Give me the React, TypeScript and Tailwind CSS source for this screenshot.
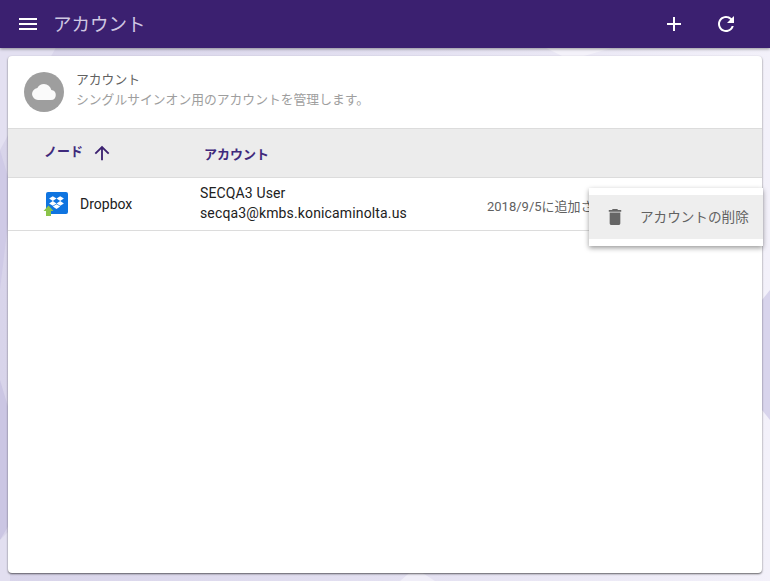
import type { ReactNode } from "react";

const font = "font-['Roboto','Noto_Sans_CJK_JP',sans-serif]";

function Icon({ size = 24, fill = "#fff", className, children }: { size?: number; fill?: string; className?: string; children: ReactNode }) {
  return (
    <svg width={size} height={size} viewBox="0 0 24 24" fill={fill} className={className}>
      {children}
    </svg>
  );
}

// faint polygons of the wallpaper, only seen around the card
function Wallpaper() {
  return (
    <svg className="absolute inset-0 h-full w-full" viewBox="0 0 770 581" preserveAspectRatio="none">
      <polygon points="0,40 60,40 0,150" fill="#e3e0f1" />
      <polygon points="0,150 12,190 0,290" fill="#cfcae6" />
      <polygon points="0,380 12,420 12,520 0,540" fill="#cbc6e3" />
      <polygon points="0,540 10,530 10,581 0,581" fill="#e2dff0" />
      <polygon points="400,581 415,568 435,581" fill="#f0eef8" />
      <polygon points="530,40 570,60 640,40" fill="#f4f2fa" />
      <polygon points="762,300 770,290 770,420 762,410" fill="#d8d4ec" />
    </svg>
  );
}

function DropboxIcon() {
  return (
    <svg width="26" height="26" viewBox="0 0 26 26" className="shrink-0">
      <rect x="3" y="1" width="22" height="22" rx="2" fill="#0f74e0" />
      <g fill="#fff">
        <path d="M9.800 5.200l3.700 2.400-3.700 2.400-3.700-2.400z" />
        <path d="M17.200 5.200l3.700 2.400-3.700 2.400-3.700-2.400z" />
        <path d="M9.800 10l3.700 2.400-3.700 2.400-3.700-2.400z" />
        <path d="M17.200 10l3.700 2.400-3.700 2.400-3.700-2.400z" />
        <path d="M9.800 15.500l3.700-2.300 3.700 2.300-3.700 2.400z" />
      </g>
      <path d="M5.500 14.500l5 5.500H8v5H3v-5H.5z" fill="#8bc34a" />
    </svg>
  );
}

export default function App() {
  return (
    <div className={`${font} relative flex h-[581px] w-full flex-col overflow-hidden bg-gradient-to-r from-[#d8d4ea] via-[#e3e0f1] to-[#f3f1fa]`}>
      <Wallpaper />

      <header className="relative flex h-12 shrink-0 items-center bg-[#3b2070] pl-4 pr-[32px] shadow-[0_1px_3px_rgba(0,0,0,0.4)]">
        <Icon>
          <path d="M3 18h18v-2H3v2zm0-5h18v-2H3v2zm0-7v2h18V6H3z" />
        </Icon>
        <h1 className="ml-[13px] mt-[3px] text-[18.5px] text-[#cfc7e2]">アカウント</h1>
        <Icon className="ml-auto">
          <path d="M19 13h-6v6h-2v-6H5v-2h6V5h2v6h6v2z" />
        </Icon>
        <Icon className="ml-[28px]">
          <path d="M17.650 6.350A7.958 7.958 0 0 0 12 4c-4.420 0-7.990 3.580-7.990 8s3.570 8 7.990 8c3.730 0 6.840-2.550 7.730-6h-2.080A5.990 5.990 0 0 1 12 18c-3.310 0-6-2.690-6-6s2.690-6 6-6c1.660 0 3.140.69 4.220 1.780L13 11h7V4l-2.350 2.350z" />
        </Icon>
      </header>

      <main className="relative mx-2 mb-2 mt-2 min-h-0 flex-1 rounded-sm bg-white shadow-[0_1px_2px_rgba(0,0,0,0.6)]">
        <section className="flex h-[73px] items-center border-b border-[#dcdcdc] pl-4">
          <div className="flex h-10 w-10 items-center justify-center rounded-full bg-[#9e9e9e]">
            <Icon fill="#fafafa">
              <path d="M19.350 10.040A7.490 7.490 0 0 0 12 4a7.500 7.500 0 0 0-6.650 4.040A6 6 0 0 0 6 20h13a5 5 0 0 0 .35-9.960z" />
            </Icon>
          </div>
          <div className="-mt-1 ml-3 text-[12.800px] leading-[20px]">
            <p className="text-[#616161]">アカウント</p>
            <p className="text-[#9e9e9e]">シングルサインオン用のアカウントを管理します。</p>
          </div>
        </section>

        <div className="flex h-[49px] items-center border-b border-[#dcdcdc] bg-[#ececec] text-[13px] font-bold text-[#3f2a7c]">
          <div className="flex w-[196px] items-center pl-9">
            <span className="-mt-[2px]">ノード</span>
            <Icon size={22} fill="#3b2070" className="ml-[8px]">
              <path d="M4 12l1.410 1.410L11 7.830V20h2V7.830l5.580 5.590L20 12l-8-8-8 8z" />
            </Icon>
          </div>
          <span className="mt-1">アカウント</span>
        </div>

        <div className="flex h-[53px] items-center border-b border-[#dcdcdc] text-sm">
          <div className="flex w-[192px] items-center pl-[35px] text-[#212121]">
            <DropboxIcon />
            <span className="ml-[11px]">Dropbox</span>
          </div>
          <div className="-mt-[2px] w-[287px] leading-[20px] tracking-[0.14px] text-[#212121]">
            <p>SECQA3 User</p>
            <p>secqa3@kmbs.konicaminolta.us</p>
          </div>
          <span className="mt-[6px] whitespace-nowrap text-[13px] text-[#616161]">2018/9/5に追加されました</span>
        </div>

        <div className="absolute right-[-1px] top-[132px] w-[174px] bg-white py-[7px] shadow-[0_2px_5px_rgba(0,0,0,0.4)]">
          <div className="flex h-[44px] items-center bg-[#eeeeee] pl-[19px] text-[13.600px] text-[#616161]">
            <svg width="14" height="16" viewBox="5 3 14 18" fill="#666">
              <path d="M6 19c0 1.100.9 2 2 2h8c1.100 0 2-.9 2-2V7H6v12zM19 4h-3.500l-1-1h-5l-1 1H5v2h14V4z" />
            </svg>
            <span className="ml-[18px]">アカウントの削除</span>
          </div>
        </div>
      </main>
    </div>
  );
}
